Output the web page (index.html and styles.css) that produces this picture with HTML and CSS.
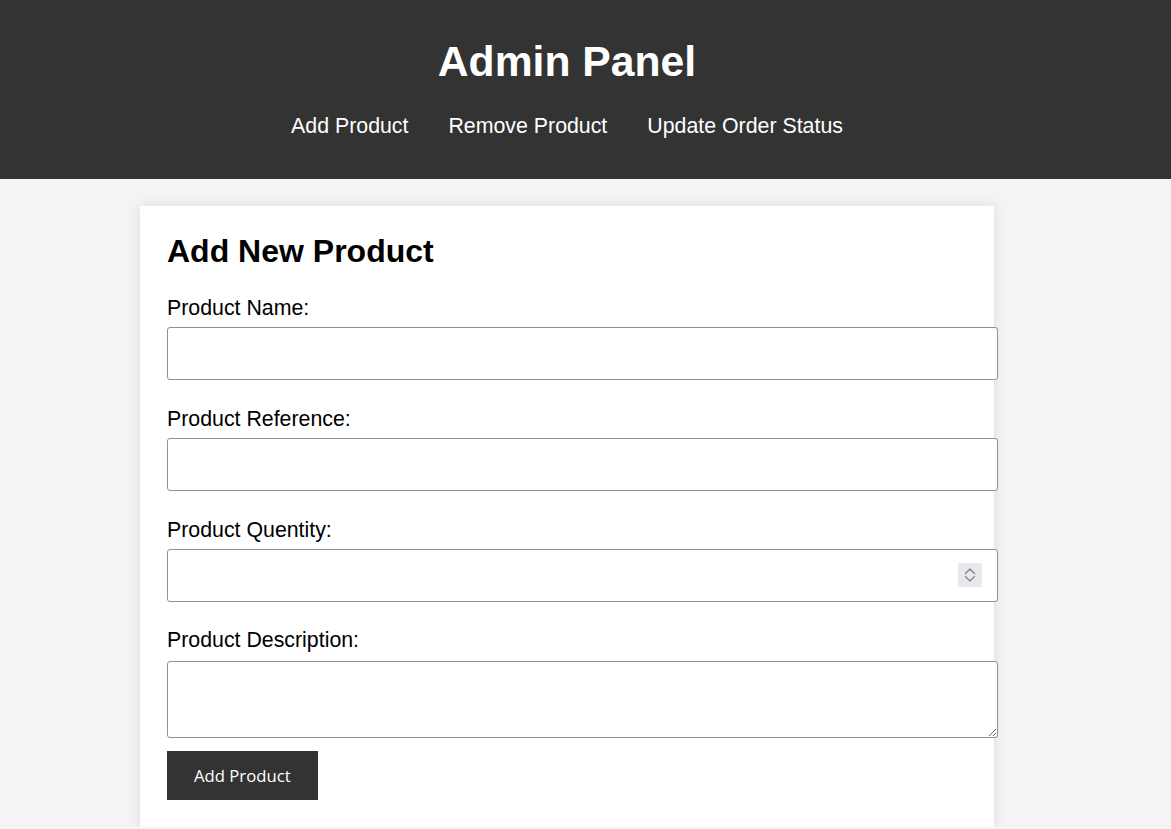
FILE: index.html
```html
<!DOCTYPE html>
<html lang="en">
<head>
<meta charset="utf-8">
<title>Admin Panel</title>
<link rel="stylesheet" href="styles.css">
</head>
<body>
<header class="header">
  <h1 class="title">Admin Panel</h1>
  <nav class="nav">
    <a class="nav-link" href="#">Add Product</a>
    <a class="nav-link" href="#">Remove Product</a>
    <a class="nav-link" href="#">Update Order Status</a>
  </nav>
</header>
<main class="card">
  <h2 class="card-title">Add New Product</h2>
  <form class="form">
    <label class="label" for="name">Product Name:</label>
    <input class="field" id="name" type="text">
    <label class="label" for="ref">Product Reference:</label>
    <input class="field" id="ref" type="text">
    <label class="label" for="qty">Product Quentity:</label>
    <div class="num-wrap">
      <input class="field field-num" id="qty" type="number">
      <span class="spinner">
        <svg width="24" height="24" viewBox="0 0 24 24"><path d="M7.5 10.5 L12 6 L16.5 10.5" fill="none" stroke="#8b8b99" stroke-width="1.5" stroke-linecap="round" stroke-linejoin="round"/><path d="M7.5 13.5 L12 18 L16.5 13.5" fill="none" stroke="#8b8b99" stroke-width="1.5" stroke-linecap="round" stroke-linejoin="round"/></svg>
      </span>
    </div>
    <label class="label" for="desc">Product Description:</label>
    <textarea class="area" id="desc"></textarea>
    <button class="btn" type="button">Add Product</button>
  </form>
</main>
</body>
</html>
```

FILE: styles.css
```css
html, body {
  margin: 0;
  padding: 0;
}
body {
  background: #f4f4f4;
  font-family: "Liberation Sans", Arial, sans-serif;
  color: #000;
}
.header {
  background: #333;
  color: #fff;
  height: 179px;
  box-sizing: border-box;
  padding: 37px 37px 0 0;
  text-align: center;
}
.title {
  margin: 0 0 28px;
  font-size: 42.67px;
  line-height: 49px;
  font-weight: bold;
}
.nav {
  display: flex;
  justify-content: center;
  gap: 40px;
}
.nav-link {
  color: #fff;
  text-decoration: none;
  font-size: 21.33px;
  line-height: 24.5px;
}
.card {
  display: block;
  box-sizing: border-box;
  width: 854px;
  margin: 27px 0 0 140px;
  padding: 27px;
  background: #fff;
  box-shadow: 0 0 13px rgba(0, 0, 0, 0.1);
}
.card-title {
  margin: 0 0 26.5px;
  font-size: 32px;
  line-height: 36.8px;
  font-weight: bold;
}
.form {
  display: flex;
  flex-direction: column;
  align-items: flex-start;
}
.label {
  display: block;
  font-size: 21.33px;
  line-height: 24.5px;
  margin-bottom: 6.5px;
}
.field {
  box-sizing: border-box;
  width: 831px;
  height: 53px;
  margin: 0 0 26.67px;
  padding: 0 13px;
  font-size: 17px;
  border: 1px solid #8f8f9d;
  border-radius: 3px;
  background: #fff;
  outline: none;
}
.num-wrap {
  position: relative;
  width: 831px;
}
.field-num {
  display: block;
  -moz-appearance: textfield;
}
.field-num::-webkit-inner-spin-button,
.field-num::-webkit-outer-spin-button {
  -webkit-appearance: none;
  margin: 0;
}
.spinner {
  position: absolute;
  left: 791px;
  top: 14px;
  width: 24px;
  height: 24px;
  background: #e9e9ed;
  display: block;
}
.spinner svg {
  display: block;
}
.area {
  box-sizing: border-box;
  width: 831px;
  height: 77px;
  margin: 2px 0 13px;
  padding: 13px;
  border: 1px solid #8f8f9d;
  border-radius: 3px;
  background: #fff;
  font-size: 17px;
  outline: none;
  display: block;
}
.btn {
  height: 49px;
  padding: 0 27px;
  border: none;
  background: #333;
  color: #fff;
  font-family: "Open Sans", "Noto Sans", sans-serif;
  font-size: 16.7px;
  cursor: pointer;
}
```
